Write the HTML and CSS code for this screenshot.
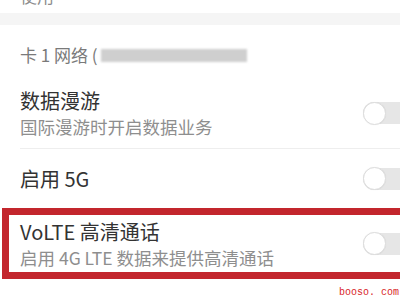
FILE: index.html
```html
<!DOCTYPE html>
<html lang="zh-CN">
<head>
<meta charset="utf-8">
<title>移动网络</title>
<link rel="stylesheet" href="styles.css">
</head>
<body>
<div class="page">
  <div class="top"><span class="top-text">使用</span></div>
  <div class="band"></div>
  <div class="section-head">
    <span>卡 1 网络 (</span><span class="blur"></span>
  </div>
  <div class="row divided">
    <div class="texts">
      <div class="title">数据漫游</div>
      <div class="sub">国际漫游时开启数据业务</div>
    </div>
    <div class="switch"><span class="knob"></span></div>
  </div>
  <div class="row single">
    <div class="texts">
      <div class="title">启用 5G</div>
    </div>
    <div class="switch"><span class="knob"></span></div>
  </div>
  <div class="highlight">
    <div class="row inner">
      <div class="texts">
        <div class="title">VoLTE 高清通话</div>
        <div class="sub">启用 4G LTE 数据来提供高清通话</div>
      </div>
      <div class="switch"><span class="knob"></span></div>
    </div>
  </div>
  <div class="watermark">booso. com</div>
</div>
</body>
</html>
```

FILE: styles.css
```css
html, body {
  margin: 0;
  padding: 0;
  background: #ffffff;
  overflow: hidden;
}
body {
  width: 400px;
  height: 300px;
  font-family: "Noto Sans CJK SC", "Noto Sans", sans-serif;
}
.page {
  width: 400px;
}
.top {
  height: 13px;
  overflow: hidden;
  padding-left: 20px;
}
.top-text {
  display: block;
  margin-top: -13px;
  font-size: 17px;
  line-height: 17px;
  color: #8c8c8c;
}
.band {
  height: 12px;
  background: #f5f5f5;
}
.section-head {
  display: flex;
  align-items: center;
  padding: 22px 0 0 20px;
  height: 16px;
  font-size: 17px;
  line-height: 16px;
  color: #7a7a7a;
}
.blur {
  display: inline-block;
  width: 146px;
  height: 13px;
  margin-left: 3px;
  background: #cfcfcf;
  filter: blur(1.2px);
}
.row {
  display: flex;
  align-items: center;
  margin-left: 20px;
  margin-right: -13px;
}
.row.divided {
  padding: 25px 0 10px;
  border-bottom: 1px solid #eeeeee;
}
.row.single {
  height: 59px;
}
.texts {
  flex: 1;
  min-width: 0;
}
.title {
  font-size: 20px;
  line-height: 26px;
  color: #333333;
}
.sub {
  margin-top: 2px;
  font-size: 17.5px;
  line-height: 22px;
  color: #8e8e8e;
}
.switch {
  width: 50px;
  height: 22px;
  border-radius: 11px;
  background: #e6e6e6;
  display: flex;
  align-items: center;
  flex: none;
}
.knob {
  width: 23px;
  height: 23px;
  box-sizing: border-box;
  border-radius: 50%;
  background: #ffffff;
  border: 1px solid #dddddd;
  box-shadow: 0 0 1px rgba(0,0,0,0.08);
}
.highlight {
  margin-left: 2px;
  margin-right: -20px;
  border: 7px solid #c3262d;
  height: 57px;
  display: flex;
  align-items: center;
}
.row.inner {
  flex: 1;
  margin-left: 11px;
  margin-right: 0;
}
.watermark {
  text-align: right;
  padding-top: 8px;
  padding-right: 1px;
  font-family: "Liberation Mono", "DejaVu Sans Mono", monospace;
  font-size: 10px;
  line-height: 11px;
  color: #d8262a;
}
```
